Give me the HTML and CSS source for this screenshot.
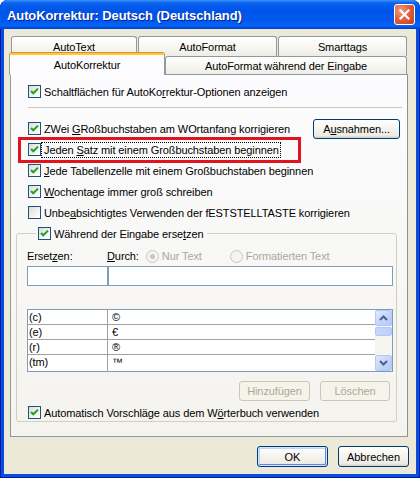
FILE: index.html
```html
<!DOCTYPE html>
<html>
<head>
<meta charset="utf-8">
<link rel="stylesheet" href="styles.css">
</head>
<body>
<div class="window">
  <div class="titlebar">
    <span class="title">AutoKorrektur: Deutsch (Deutschland)</span>
    <span class="close"><svg width="13" height="13" viewBox="0 0 13 13"><path d="M2.5 2.5 L10.5 10.5 M10.5 2.5 L2.5 10.5" stroke="#fff" stroke-width="2.2" stroke-linecap="square"/></svg></span>
  </div>
  <div class="client">
    <div class="tabs">
      <div class="tabrow row1">
        <div class="tab t-text">AutoText</div>
        <div class="tab t-format">AutoFormat</div>
        <div class="tab t-smart">Smarttags</div>
      </div>
      <div class="tabrow row2">
        <div class="tab active">AutoKorrektur</div>
        <div class="tab t-during">AutoFormat während der Eingabe</div>
      </div>
    </div>
    <div class="panel">
      <div class="row first">
        <span class="box"><svg width="11" height="11" viewBox="0 0 11 11"><path d="M2 5 L4.3 7.3 L9 2.6" fill="none" stroke="#21A121" stroke-width="2"/></svg></span>
        <span class="lbl">Schaltflächen für AutoKo<u>r</u>rektur-Optionen anzeigen</span>
      </div>
      <div class="sep"></div>
      <div class="row second">
        <span class="box"><svg width="11" height="11" viewBox="0 0 11 11"><path d="M2 5 L4.3 7.3 L9 2.6" fill="none" stroke="#21A121" stroke-width="2"/></svg></span>
        <span class="lbl">ZWei <u>G</u>Roßbuchstaben am WOrtanfang korrigieren</span>
        <span class="btn except">A<u>u</u>snahmen...</span>
      </div>
      <div class="row marked">
        <span class="box"><svg width="11" height="11" viewBox="0 0 11 11"><path d="M2 5 L4.3 7.3 L9 2.6" fill="none" stroke="#21A121" stroke-width="2"/></svg></span>
        <span class="lbl focus">Jeden <u>S</u>atz mit einem Großbuchstaben beginnen</span>
        <span class="redmark"></span>
      </div>
      <div class="row">
        <span class="box"><svg width="11" height="11" viewBox="0 0 11 11"><path d="M2 5 L4.3 7.3 L9 2.6" fill="none" stroke="#21A121" stroke-width="2"/></svg></span>
        <span class="lbl"><u>J</u>ede Tabellenzelle mit einem Großbuchstaben beginnen</span>
      </div>
      <div class="row">
        <span class="box"><svg width="11" height="11" viewBox="0 0 11 11"><path d="M2 5 L4.3 7.3 L9 2.6" fill="none" stroke="#21A121" stroke-width="2"/></svg></span>
        <span class="lbl"><u>W</u>ochentage immer groß schreiben</span>
      </div>
      <div class="row">
        <span class="box"></span>
        <span class="lbl">Unbe<u>a</u>bsichtigtes Verwenden der fESTSTELLTASTE korrigieren</span>
      </div>
      <fieldset class="group">
        <legend class="legend">
          <span class="box"><svg width="11" height="11" viewBox="0 0 11 11"><path d="M2 5 L4.3 7.3 L9 2.6" fill="none" stroke="#21A121" stroke-width="2"/></svg></span>
          <span class="lbl">Während der Eingabe erse<u>t</u>zen</span>
        </legend>
        <div class="labels">
          <span class="col1">Erset<u>z</u>en:</span>
          <span><u>D</u>urch:</span>
          <span class="radio r1"><span class="dot"></span></span>
          <span class="dis">Nur Text</span>
          <span class="radio r2"></span>
          <span class="dis">Formatierten Text</span>
        </div>
        <div class="inputs">
          <div class="field f1"></div>
          <div class="field f2"></div>
        </div>
        <div class="list">
          <div class="rows">
            <div class="lrow"><span class="c1">(c)</span><span class="c2">©</span></div>
            <div class="lrow"><span class="c1">(e)</span><span class="c2">€</span></div>
            <div class="lrow"><span class="c1">(r)</span><span class="c2">®</span></div>
            <div class="lrow"><span class="c1">(tm)</span><span class="c2">™</span></div>
          </div>
          <div class="scroll">
            <div class="sbtn"><svg width="9" height="6" viewBox="0 0 9 6"><path d="M1 5 L4.5 1.5 L8 5" fill="none" stroke="#4D6185" stroke-width="2"/></svg></div>
            <div class="thumb"></div>
            <div class="track"></div>
            <div class="sbtn"><svg width="9" height="6" viewBox="0 0 9 6"><path d="M1 1 L4.5 4.5 L8 1" fill="none" stroke="#4D6185" stroke-width="2"/></svg></div>
          </div>
        </div>
        <div class="gbuttons">
          <span class="btn disabled b-add">Hinzufügen</span>
          <span class="btn disabled b-del">Löschen</span>
        </div>
        <div class="row last">
          <span class="box"><svg width="11" height="11" viewBox="0 0 11 11"><path d="M2 5 L4.3 7.3 L9 2.6" fill="none" stroke="#21A121" stroke-width="2"/></svg></span>
          <span class="lbl">Automatisch Vorschläge aus dem W<u>ö</u>rterbuch verwenden</span>
        </div>
      </fieldset>
    </div>
    <div class="footer">
      <span class="btn default">OK</span>
      <span class="btn">Abbrechen</span>
    </div>
  </div>
</div>
</body>
</html>
```

FILE: styles.css
```css
* { box-sizing: border-box; }
body {
  margin: 0;
  font-family: "Liberation Sans", Arial, sans-serif;
  font-size: 11px;
  color: #000;
}
u { text-decoration: underline; text-underline-offset: 1px; }

.window {
  width: 420px;
  height: 478px;
  display: flex;
  flex-direction: column;
  background: #0A4EDD;
  border-radius: 8px 8px 0 0;
  overflow: hidden;
  box-shadow: inset 1px 0 #0019A8, inset -1px 0 #0019A8, inset 0 -1px #0019A8;
}

.titlebar {
  height: 29px;
  flex: none;
  display: flex;
  align-items: center;
  padding: 0 5px 0 7px;
  background: linear-gradient(#3D95FF 0%, #0A63F0 10%, #0055E8 35%, #0058EE 70%, #0663F4 88%, #0050E0 95%, #0040D0 100%);
}
.title {
  color: #fff;
  font-weight: bold;
  font-size: 13px;
  letter-spacing: -0.1px;
  text-shadow: 1px 1px #0A1E8C;
  flex: 1;
  padding-top: 1px;
}
.close {
  width: 21px;
  height: 21px;
  border: 1px solid #fff;
  border-radius: 3px;
  background: radial-gradient(circle at 30% 30%, #F0A080 0%, #E2613F 45%, #C9381B 100%);
  display: flex;
  align-items: center;
  justify-content: center;
}

.client {
  flex: 1;
  margin: 0 4px 4px 4px;
  background: #ECE9D8;
  padding: 7px 7px 0 6px;
  display: flex;
  flex-direction: column;
}

/* tabs */
.tabs { width: 398px; }
.tabrow { display: flex; align-items: flex-end; }
.row1 { height: 20px; padding-left: 1px; gap: 1px; }
.row2 { height: 18px; }
.tab {
  border: 1px solid #919B9C;
  border-bottom: none;
  border-radius: 3px 3px 0 0;
  background: linear-gradient(#FFFFFF, #F6F5F0 60%, #ECEBE5);
  display: flex;
  align-items: center;
  justify-content: center;
  height: 100%;
  letter-spacing: -0.1px;
}
.t-text { width: 126px; }
.t-format { width: 139px; }
.t-smart { flex: 1; margin-right: 1px; }
.active {
  width: 156px;
  height: 23px;
  margin: -4px 0 -1px -1px;
  position: relative;
  z-index: 2;
  background: #FCFCFE;
  border-top: 3px solid #E68B2C;
  padding-bottom: 1px;
}
.active::before {
  content: "";
  position: absolute;
  left: 0; right: 0; top: -2px;
  height: 2px;
  background: #FFC83C;
}
.t-during { flex: 1; margin-right: 1px; }

/* panel */
.panel {
  width: 398px;
  height: 363px;
  border: 1px solid #919B9C;
  border-right-color: #8A9394;
  background: linear-gradient(#FCFCFE, #F4F3EE);
  padding-top: 6px;
  display: flex;
  flex-direction: column;
  letter-spacing: -0.1px;
}
.row {
  height: 21px;
  display: flex;
  align-items: center;
  padding-left: 17px;
  padding-right: 7px;
  position: relative;
}
.box {
  width: 13px;
  height: 13px;
  flex: none;
  border: 1px solid #1C5180;
  background: linear-gradient(135deg, #DCDCD7 0%, #F4F4F0 60%, #FFFFFF 100%);
  display: flex;
}
.lbl { margin-left: 3px; white-space: nowrap; }
.sep {
  height: 1px;
  margin: 5px 5px 0 17px;
  background: #C9C7BA;
}
.second { margin-top: 10px; }
.btn {
  display: inline-flex;
  align-items: center;
  justify-content: center;
  height: 20px;
  border: 1px solid #003C74;
  border-radius: 3px;
  background: linear-gradient(#FFFFFF 0%, #F4F3EE 50%, #ECEBE6 86%, #D6D0C5 100%);
  white-space: nowrap;
}
.except { margin-left: auto; width: 87px; }
.focus { outline: 1px dotted #000; outline-offset: 0; padding: 1px 1px 1px 2px; margin-left: 1px; }
.redmark {
  position: absolute;
  left: 7px;
  top: -2px;
  width: 283px;
  height: 26px;
  border: 3px solid #E0141E;
  pointer-events: none;
}

/* group */
.group {
  margin: 0 10px 0 5px;
  padding: 0 3px 1px 10px;
  border: 1px solid #D0D0BF;
  border-radius: 3px;
  min-width: 0;
}
.legend {
  height: 21px;
  margin-left: 9px;
  padding: 0 4px 0 2px;
  display: flex;
  align-items: center;
}
.labels {
  height: 16px;
  margin-top: 4px;
  display: flex;
  align-items: center;
  white-space: nowrap;
}
.col1 { width: 80px; }
.radio {
  width: 13px;
  height: 13px;
  border-radius: 50%;
  border: 1px solid #CAC8BB;
  background: #F4F4F0;
  display: flex;
  align-items: center;
  justify-content: center;
  margin-right: 3px;
}
.r1 { margin-left: 7px; }
.r2 { margin-left: 28px; }
.dot { width: 5px; height: 5px; border-radius: 50%; background: #CAC8BB; }
.dis { color: #ACA899; }
.inputs {
  display: flex;
  margin-top: 2px;
  height: 20px;
}
.field { border: 1px solid #7F9DB9; background: #fff; height: 100%; }
.f1 { width: 81px; }
.f2 { flex: 1; }
.list {
  margin-top: 23px;
  height: 63px;
  border: 1px solid #7F9DB9;
  background: #fff;
  display: flex;
}
.rows { flex: 1; display: flex; flex-direction: column; }
.lrow {
  height: 15px;
  display: flex;
  border-bottom: 1px solid #A0A0A0;
}
.lrow:last-child { border-bottom: none; height: 16px; }
.c1 { width: 80px; border-right: 1px solid #A0A0A0; padding-left: 1px; line-height: 14px; }
.c2 { padding-left: 4px; line-height: 14px; }
.scroll {
  width: 17px;
  display: flex;
  flex-direction: column;
  background: #F6F6F1;
}
.sbtn {
  height: 16px;
  border: 1px solid #B5C8F3;
  border-radius: 2px;
  background: linear-gradient(135deg, #E0E9FE, #C1D3FB 60%, #B2C8F8);
  display: flex;
  align-items: center;
  justify-content: center;
}
.thumb {
  height: 9px;
  margin-top: 1px;
  border: 1px solid #B5C8F3;
  border-radius: 2px;
  background: linear-gradient(to right, #C9D8FC, #BCCFFA);
}
.track { flex: 1; }
.gbuttons {
  display: flex;
  justify-content: flex-end;
  gap: 10px;
  margin-top: 9px;
  padding-right: 3px;
}
.disabled {
  border-color: #C9C7BA;
  background: #F5F4EA;
  color: #ACA899;
}
.b-add { width: 71px; }
.b-del { width: 70px; }
.last {
  height: 15px;
  margin-top: 4px;
  padding-left: 1px;
}

/* footer */
.footer {
  display: flex;
  justify-content: flex-end;
  gap: 10px;
  margin-top: 9px;
  width: 399px;
}
.footer .btn { width: 71px; height: 21px; }
.default {
  box-shadow: inset 0 0 0 1px #CEE7FF, inset -1px -1px 0 1px #6982EE, inset 1px 1px 0 1px #BCD4F6;
}
```
